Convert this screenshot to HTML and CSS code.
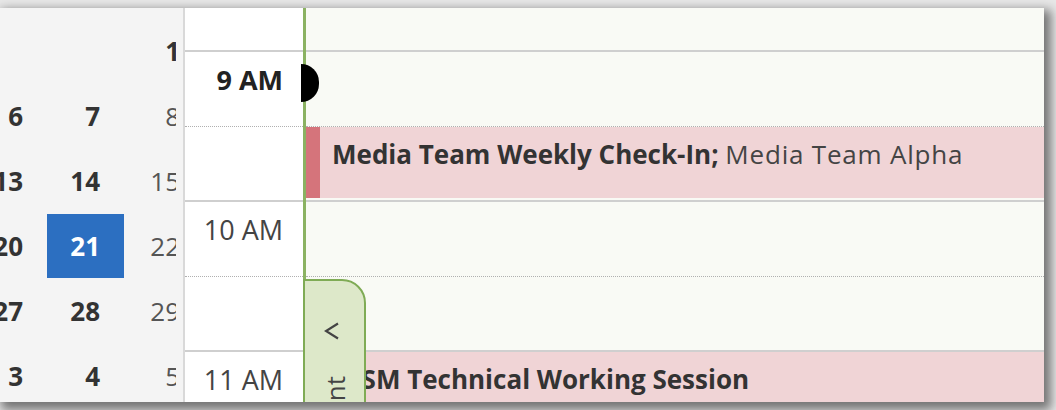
FILE: index.html
```html
<!DOCTYPE html>
<html>
<head>
    <meta charset="utf-8" />
    <title>Calendar - Day</title>
    <meta name="viewport" content="width=device-width, initial-scale=1">
    <link rel="stylesheet" href="styles.css">
</head>
<body>
    <div class="window">
        <aside class="nav">
            <div class="month">
                <div class="days">
                    <span></span><span></span><span class="bold">1</span>
                    <span class="bold">6</span><span class="bold">7</span><span>8</span>
                    <span class="bold">13</span><span class="bold">14</span><span>15</span>
                    <span class="bold">20</span><span class="sel">21</span><span>22</span>
                    <span class="bold">27</span><span class="bold">28</span><span>29</span>
                    <span class="bold">3</span><span class="bold">4</span><span>5</span>
                </div>
            </div>
        </aside>
        <div class="times">
            <div class="row top"></div>
            <div class="row hour"><span class="now">9 AM</span></div>
            <div class="row half"></div>
            <div class="row hour">10 AM</div>
            <div class="row half"></div>
            <div class="row hour">11 AM</div>
        </div>
        <div class="day">
            <div class="row top"></div>
            <div class="row hour"></div>
            <div class="row half">
                <div class="event">
                    <div class="bar"></div>
                    <div class="text"><b>Media Team Weekly Check-In;</b> <span class="where">Media Team Alpha</span></div>
                </div>
            </div>
            <div class="row hour"></div>
            <div class="row half"></div>
            <div class="row hour">
                <div class="event last">
                    <div class="bar"></div>
                    <div class="text"><b>CSM Technical Working Session</b></div>
                </div>
            </div>
            <!-- current time marker -->
            <div class="now-mark"></div>
            <!-- collapsed side pane -->
            <div class="tab">
                <svg width="16" height="18" viewBox="0 0 16 18">
                    <polyline points="14,1.5 2,9 14,16.5" fill="none" stroke="#444" stroke-width="2.2"/>
                </svg>
                <div class="tab-label">Appointment</div>
            </div>
        </div>
    </div>
</body>
</html>
```

FILE: styles.css
```css
*{
    box-sizing: border-box;
}
body{
    margin: 0;
    height: 410px;
    overflow: hidden;
    background: #e8e8e8;
    font-family: "Open Sans", "Noto Sans", sans-serif;
    color: #333;
}
.window{
    display: flex;
    margin-top: 8px;
    width: 1044px;
    height: 394px;
    overflow: hidden;
    background: #fff;
    box-shadow: 4px 5px 10px 3px rgba(0,0,0,.5);
}

/* date navigator */
.nav{
    flex: none;
    width: 185px;
    padding-top: 11px;
    background: #f4f4f4;
    border-right: 2px solid #d9d9d9;
}
.month{
    width: 176px;
    overflow: hidden;
}
.days{
    display: grid;
    grid-template-columns: 77px 77px 80px;
    grid-auto-rows: 65px;
    margin-left: -30px;
}
.days span{
    padding-right: 24px;
    text-align: right;
    font-size: 26px;
    line-height: 64px;
    color: #555;
}
.days .bold{
    font-weight: 700;
    color: #333;
}
.days .sel{
    height: 64px;
    font-weight: 700;
    color: #fff;
    background: #2c6fc1;
}

/* time ruler + day column */
.times{
    flex: none;
    width: 118px;
    background: #fff;
}
.day{
    position: relative;
    flex: 1;
    border-left: 3px solid #8bb262;
    background: #f9faf5;
}
.row{
    height: 75px;
    border-bottom: 2px solid #cfcfcf;
}
.row.top{
    height: 44px;
}
.row.hour{
    border-bottom: 1px dotted #b0b0b0;
}
.times .row.hour{
    padding: 12px 20px 0 0;
    text-align: right;
    font-size: 27px;
    line-height: 32px;
    color: #444;
}
.times .now{
    font-weight: 700;
    color: #222;
}

.event{
    display: flex;
    height: 71px;
    background: #f0d4d6;
}
.event.last{
    height: 60px;
}
.event .bar{
    flex: none;
    width: 14px;
    background: #d5747b;
}
.event .text{
    padding: 11px 0 0 12px;
    font-size: 26px;
    line-height: 32px;
    white-space: nowrap;
    color: #444;
}
.event .text b{
    color: #333;
}
.event .where{
    letter-spacing: .8px;
}
.event.last .text{
    padding-left: 25px;
}

.now-mark{
    position: absolute;
    left: -5px;
    top: 56px;
    width: 18px;
    height: 38px;
    border-radius: 0 19px 19px 0;
    background: #000;
}
.tab{
    position: absolute;
    left: -3px;
    top: 271px;
    display: flex;
    flex-direction: column;
    align-items: center;
    width: 63px;
    height: 150px;
    padding-top: 41px;
    overflow: hidden;
    background: #dde8c9;
    border: 2px solid #7fab55;
    border-radius: 0 24px 0 0;
}
.tab svg{
    flex: none;
    margin-right: 5px;
}
.tab-label{
    flex: none;
    margin-top: 36px;
    writing-mode: vertical-rl;
    transform: rotate(180deg);
    font-size: 26px;
    line-height: 30px;
    white-space: nowrap;
    color: #444;
}
```
